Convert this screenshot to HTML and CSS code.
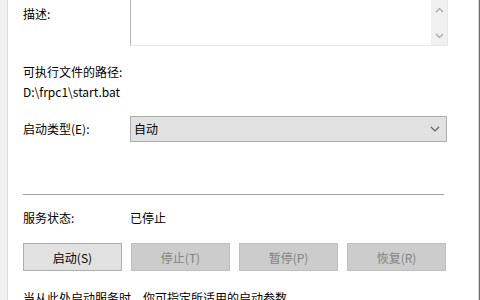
FILE: index.html
```html
<!DOCTYPE html>
<html lang="zh-CN">
<head>
    <meta charset="UTF-8">
    <title>服务属性</title>
    <link rel="stylesheet" href="styles.css">
</head>
<body>
    <div class="window">
        <div class="panel">
            <div class="row desc-row">
                <span class="label top-label">描述:</span>
                <div class="textbox">
                    <div class="scrollbar">
                        <svg width="9" height="6" viewBox="0 0 9 6"><path d="M1 5 L4.5 1.5 L8 5" fill="none" stroke="#a6a6a6" stroke-width="1.2"/></svg>
                        <svg width="9" height="6" viewBox="0 0 9 6"><path d="M1 1 L4.5 4.5 L8 1" fill="none" stroke="#a6a6a6" stroke-width="1.2"/></svg>
                    </div>
                </div>
            </div>

            <div class="text path-label">可执行文件的路径:</div>
            <div class="text path-value">D:\frpc1\start.bat</div>

            <div class="row type-row">
                <span class="label">启动类型(E):</span>
                <div class="combo">
                    <span>自动</span>
                    <svg width="10" height="6" viewBox="0 0 10 6"><path d="M1 1 L5 5 L9 1" fill="none" stroke="#5f5f5f" stroke-width="1.2"/></svg>
                </div>
            </div>

            <div class="separator"></div>

            <div class="row status-row">
                <span class="label">服务状态:</span>
                <span>已停止</span>
            </div>

            <div class="buttons">
                <button class="btn">启动(S)</button>
                <button class="btn" disabled>停止(T)</button>
                <button class="btn" disabled>暂停(P)</button>
                <button class="btn" disabled>恢复(R)</button>
            </div>

            <div class="text hint">当从此处启动服务时，你可指定所适用的启动参数。</div>
        </div>
        <div class="gutter"></div>
    </div>
</body>
</html>
```

FILE: styles.css
```css
html, body {
    margin: 0;
    padding: 0;
    height: 100%;
    overflow: hidden;
}
body {
    background: #f0f0f0;
    font-family: "Noto Sans CJK SC", "Noto Sans", sans-serif;
    font-size: 12px;
    line-height: 16px;
    color: #000;
}
.window {
    display: flex;
    height: 300px;
    border-right: 1px solid #1a7dd7;
}
.panel {
    width: 461px;
    margin-left: 7px;
    background: #fff;
    border-left: 1px solid #dadada;
    border-right: 1px solid #dadada;
    padding-left: 15px;
    overflow: hidden;
}
.gutter {
    flex: 1;
}
.row {
    display: flex;
    align-items: center;
}
.label {
    width: 107px;
    flex: none;
}
.desc-row {
    align-items: flex-start;
    height: 46px;
}
.top-label {
    padding-top: 6px;
}
.textbox {
    width: 316px;
    height: 45px;
    border-left: 1px solid #b4b4b4;
    border-right: 1px solid #e8e8e8;
    border-bottom: 1px solid #e8e8e8;
    display: flex;
    justify-content: flex-end;
}
.scrollbar {
    width: 16px;
    background: #f0f0f0;
    display: flex;
    flex-direction: column;
    align-items: center;
    justify-content: space-between;
    padding: 7px 0 6px;
    box-sizing: border-box;
}
.path-label {
    margin-top: 18px;
}
.path-value {
    margin-top: 4px;
}
.type-row {
    margin-top: 16px;
}
.combo {
    width: 317px;
    height: 26px;
    box-sizing: border-box;
    background: #e1e1e1;
    border: 1px solid #adadad;
    display: flex;
    align-items: center;
    justify-content: space-between;
    padding: 0 6px 0 3px;
}
.separator {
    margin-top: 52px;
    width: 421px;
    height: 1px;
    background: #a0a0a0;
}
.status-row {
    margin-top: 15px;
}
.buttons {
    display: flex;
    gap: 9px;
    margin-top: 17px;
    padding-right: 21px;
}
.btn {
    width: 99px;
    height: 28px;
    font-family: inherit;
    font-size: 12px;
    color: #000;
    background: #e1e1e1;
    border: 1px solid #adadad;
    padding: 0;
}
.btn:disabled {
    background: #cccccc;
    border-color: #bfbfbf;
    color: #838383;
}
.hint {
    margin-top: 19px;
    white-space: nowrap;
}
```
